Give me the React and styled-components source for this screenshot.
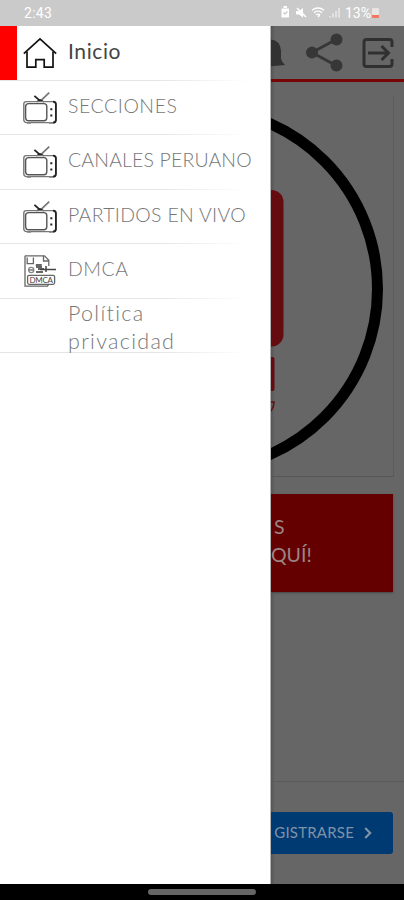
import styled, { createGlobalStyle } from 'styled-components';

const GlobalStyle = createGlobalStyle`
  * {
    box-sizing: border-box;
  }

  body {
    margin: 0;
    background: #000;
    font-family: Lato, 'Open Sans', sans-serif;
  }
`;

const menu = [
  { label: 'Inicio', icon: 'home', active: true, size: 21, spacing: 0.6 },
  { label: 'SECCIONES', icon: 'tv', size: 19.5, spacing: 0.55 },
  { label: 'CANALES PERUANO', icon: 'tv', size: 19.5, spacing: 0.15 },
  { label: 'PARTIDOS EN VIVO', icon: 'tv', size: 19.5, spacing: 0.3 },
  { label: 'DMCA', icon: 'dmca', size: 19.5, spacing: 0.5 },
  { label: 'Política privacidad', size: 21.5, spacing: 1.3, tall: true },
];

function HomeIcon() {
  return (
    <svg width="36" height="34" viewBox="0 0 36 34" fill="none" stroke="#111" strokeWidth="1.7">
      <path d="M1.8 17.6 18 2.8l16.2 14.8" />
      <path d="M5 15.5V31.2h8.8v-7.6h8.4v7.6H31V15.5" />
    </svg>
  );
}

function TvIcon() {
  return (
    <svg width="36" height="34" viewBox="0 0 36 34" fill="none" stroke="#222" strokeWidth="1.4">
      <path d="m12.4 4.8 6 5.4" strokeWidth="1.8" />
      <path d="m18.4 10.2 8.8-8.6" stroke="#777" strokeWidth="1.7" />
      <path d="m14.5 10.8 3.5-2 4 2" />
      <rect x="1.8" y="10.6" width="32" height="21" rx="2.5" stroke="#777" />
      <path d="M31 10.6q2.9 0 2.9 2.8v15.5q0 2.7-3 2.7" strokeWidth="1.8" />
      <path d="M3.6 26V15.6q0-3 3.2-3h15q3 0 3 3v11.2q0 3-3 3H6.6q-3 0-3-3.8z" stroke="#555" />
      <path d="M28.3 18.2h2M28.3 24.4h2" strokeWidth="2" />
      <path d="M5 32.4h4M27 32.4h4" stroke="#999" />
    </svg>
  );
}

function DmcaIcon() {
  return (
    <svg width="36" height="34" viewBox="0 0 36 34" fill="none" stroke="#666" strokeWidth="1.3">
      <path d="M3 1.8h19.5l4.3 4.4V12M3 1.8v30.4h22.5l1.3-2" />
      <path d="M21.5 2v5h5M5.2 3.5v6.2h6.2V3.5" />
      <path d="M13.8 11h6M14 13h6M16 15h6M14 18h7" stroke="#333" strokeWidth="1.6" />
      <path d="M24 12v6M18 15.5h16" stroke="#444" strokeWidth="1.5" />
      <circle cx="9.2" cy="16" r="2.6" stroke="#888" />
      <path d="M7 16h4.5" />
      <rect x="5.6" y="21.3" width="27" height="9" rx="1.5" stroke="#666" />
      <text x="7.4" y="28.7" fill="#444" stroke="none" fontSize="8" textLength="23.5">DMCA</text>
    </svg>
  );
}

function StatusIcons() {
  return (
    <svg width="62" height="18" viewBox="280 4 62 18" fill="none" stroke="#fff" strokeWidth="1.4">
      <path d="M281.5 8.5h7.5v9h-7.5z" fill="#fff" stroke="none" />
      <path d="M283.5 7h3.5" strokeWidth="2" />
      <path d="m283.5 12.6 1.4 1.4 2.5-2.6" stroke="#ccc" />
      <path d="M296 11h3l4-3v9.5l-4-3h-3z" fill="#fff" stroke="none" />
      <path d="m297 8 9 9" strokeWidth="1.5" />
      <path d="M312 10.3q6-4.5 12 0M314 12.6q4-3 8 0M316 14.8q2-1.4 4 0" />
      <path d="m318 17 1.6-2" />
      <path d="M330 16v1.5M333 13.5v4M336 11v6.5M339 8v9.5" stroke="#e8e8e8" strokeWidth="1.6" />
    </svg>
  );
}

function HeaderIcons() {
  return (
    <svg width="133" height="53" viewBox="271 26 133 53">
      <path d="M264 67V53q0-12 5-13.500 11 0 12 11v8.5q1 3 4 6z" fill="#323232" />
      <g stroke="#373737" fill="#373737" strokeWidth="3">
        <path d="m312 52.5 24-13M312 52.5l24 13" />
        <circle cx="312" cy="52.5" r="4.5" />
        <circle cx="336.5" cy="39.5" r="4.5" />
        <circle cx="336.5" cy="65.5" r="4.5" />
      </g>
      <g fill="none" stroke="#303030" strokeWidth="3">
        <path d="M392 47v-5q0-2.500-2.500-2.500h-23q-2.500 0-2.500 2.500v22q0 2.500 2.500 2.500h23q2.500 0 2.500-2.500v-5" />
        <path d="M368 53h20M381.500 46l7 7-7 7" />
      </g>
    </svg>
  );
}

function ChannelLogo() {
  return (
    <svg width="122" height="380" viewBox="271 96 122 380">
      <circle cx="196.5" cy="289" r="181" fill="none" stroke="#000" strokeWidth="11" />
      <rect x="200" y="190" width="83.5" height="156.5" rx="12" fill="#650c10" />
      <rect x="255" y="357" width="19.5" height="34" rx="2" fill="#650c10" />
      <path d="M271 402h3q0 5-3 9" fill="none" stroke="#650c10" strokeWidth="1.5" />
    </svg>
  );
}

const icons = { home: HomeIcon, tv: TvIcon, dmca: DmcaIcon };

function App() {
  return (
    <>
      <GlobalStyle />
      <Screen>
        <StatusBar>
          <Clock>2:43</Clock>
          <StatusIcons />
          <Percent>13%</Percent>
          <Battery />
        </StatusBar>
        <Body>
          <Drawer>
            {menu.map((item) => {
              const Icon = icons[item.icon];
              return (
                <MenuItem key={item.label}>
                  <Marker $active={item.active} />
                  <IconSlot>{Icon && <Icon />}</IconSlot>
                  <Label $active={item.active} $size={item.size} $spacing={item.spacing} $tall={item.tall}>
                    {item.label}
                  </Label>
                </MenuItem>
              );
            })}
          </Drawer>
          <Page>
            <Header>
              <HeaderIcons />
            </Header>
            <Card>
              <ChannelLogo />
            </Card>
            <RedButton>
              <RedLine $indent={3}>S</RedLine>
              <RedLine>QUÍ!</RedLine>
            </RedButton>
            <Banner>
              <BlueButton>
                <BlueText>GISTRARSE</BlueText>
                <Chevron viewBox="0 0 8 12">
                  <path d="m1.2 1 5 5-5 5" />
                </Chevron>
              </BlueButton>
            </Banner>
          </Page>
        </Body>
        <NavBar>
          <Handle />
        </NavBar>
      </Screen>
    </>
  );
}

export default App;

const Screen = styled.div`
  display: flex;
  flex-direction: column;
  width: 404px;
  height: 900px;
  overflow: hidden;
`;

const StatusBar = styled.div`
  display: flex;
  align-items: center;
  height: 26px;
  padding: 0 21px 0 24px;
  background: #cacaca;
  color: #fff;
  font-family: Roboto, sans-serif;
`;

const Clock = styled.span`
  width: 256px;
  font-size: 14px;
  letter-spacing: 0.3px;
`;

const Percent = styled.span`
  margin-left: 3px;
  font-size: 14px;
`;

const Battery = styled.span`
  width: 7px;
  height: 10px;
  margin-left: 1px;
  border-radius: 1px;
  background: linear-gradient(#e8e4e2 70%, #ee7860 70%);
`;

const Body = styled.div`
  display: flex;
  height: 858px;
`;

const Drawer = styled.nav`
  flex: none;
  width: 271px;
  border-right: 1px solid #b5b5b5;
  background: #fff;
`;

const MenuItem = styled.div`
  display: flex;
  align-items: center;
  height: 54.5px;
  background: linear-gradient(90deg, #e6e6e6 60%, #fff 92%) bottom / 100% 1px no-repeat;
`;

const Marker = styled.div`
  width: 17px;
  height: 53.5px;
  margin-bottom: 1px;
  background: ${(props) => (props.$active ? '#ff0000' : 'transparent')};
`;

const IconSlot = styled.div`
  display: flex;
  width: 51px;
  padding-left: 5px;
`;

const Label = styled.div`
  width: ${(props) => (props.$tall ? '130px' : 'auto')};
  margin-top: ${(props) => (props.$tall ? '3px' : '-4px')};
  color: ${(props) => (props.$active ? '#444' : '#777')};
  font-size: ${(props) => props.$size}px;
  font-weight: ${(props) => (props.$active ? 400 : 300)};
  letter-spacing: ${(props) => props.$spacing}px;
  line-height: 28px;
  white-space: ${(props) => (props.$tall ? 'normal' : 'nowrap')};
`;

const Page = styled.main`
  display: flex;
  flex-direction: column;
  width: 133px;
  overflow: hidden;
  background: linear-gradient(90deg, #555, #666 4px);
`;

const Header = styled.header`
  height: 56px;
  border-bottom: 3px solid #750507;
`;

const Card = styled.section`
  width: 123px;
  height: 381px;
  margin-top: 14px;
  border-right: 1px solid #5c5c5c;
  border-bottom: 1px solid #565656;
`;

const RedButton = styled.div`
  display: flex;
  flex-direction: column;
  justify-content: center;
  width: 121.5px;
  height: 98px;
  margin-top: 17px;
  padding-bottom: 4px;
  background: #650000;
  box-shadow: 0 1px 2px #444;
`;

const RedLine = styled.div`
  padding-left: ${(props) => props.$indent || 0}px;
  color: #9b8585;
  font-size: 19.5px;
  line-height: 28px;
`;

const Banner = styled.footer`
  display: flex;
  height: 103px;
  margin-top: auto;
  padding-top: 30px;
  border-top: 1px solid #5b5b5b;
`;

const BlueButton = styled.div`
  display: flex;
  align-items: center;
  gap: 10px;
  justify-content: flex-end;
  width: 122px;
  height: 42px;
  padding-right: 21px;
  border-radius: 0 3px 3px 0;
  background: #003a72;
`;

const BlueText = styled.span`
  margin-top: -2px;
  color: #7f93a8;
  font-size: 15px;
  letter-spacing: 0.2px;
`;

const Chevron = styled.svg`
  flex: none;
  width: 8px;
  height: 12px;
  fill: none;
  stroke: #7f93a8;
  stroke-width: 2.2;
`;

const NavBar = styled.div`
  display: flex;
  justify-content: center;
  height: 16px;
  padding-top: 5px;
  background: #000;
`;

const Handle = styled.div`
  width: 108px;
  height: 6px;
  border-radius: 3px;
  background: #666;
`;
